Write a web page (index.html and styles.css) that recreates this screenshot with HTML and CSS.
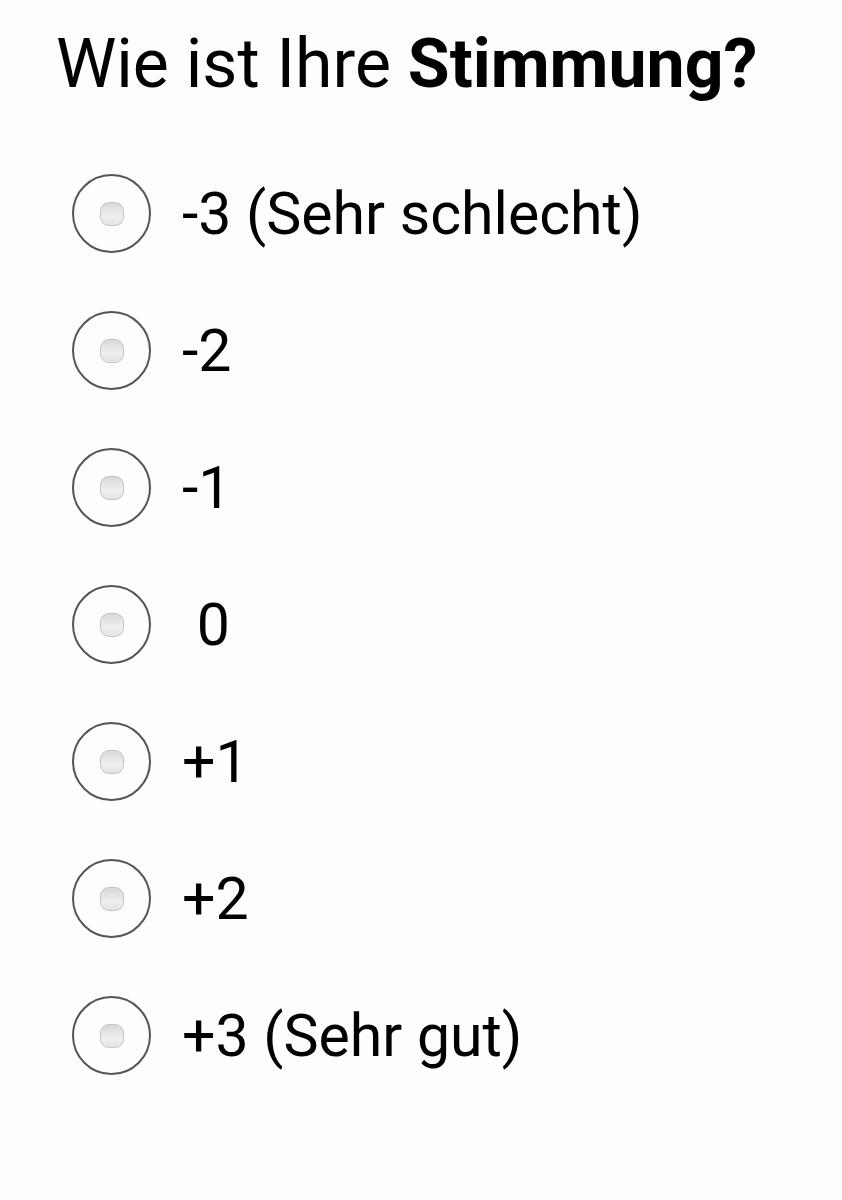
FILE: index.html
```html
<!DOCTYPE html>
<html lang="de">
<head>
<meta charset="utf-8">
<title>Stimmung</title>
<link rel="stylesheet" href="styles.css">
</head>
<body>
<main class="page">
  <h1 class="title">Wie ist Ihre <strong>Stimmung?</strong></h1>
  <ul class="options">
    <li class="option"><span class="radio"><span class="dot"></span></span><span class="label">-3 (Sehr schlecht)</span></li>
    <li class="option"><span class="radio"><span class="dot"></span></span><span class="label">-2</span></li>
    <li class="option"><span class="radio"><span class="dot"></span></span><span class="label">-1</span></li>
    <li class="option"><span class="radio"><span class="dot"></span></span><span class="label">&nbsp;0</span></li>
    <li class="option"><span class="radio"><span class="dot"></span></span><span class="label">+1</span></li>
    <li class="option"><span class="radio"><span class="dot"></span></span><span class="label">+2</span></li>
    <li class="option"><span class="radio"><span class="dot"></span></span><span class="label">+3 (Sehr gut)</span></li>
  </ul>
</main>
</body>
</html>
```
FILE: styles.css
```css
html, body {
  margin: 0;
  padding: 0;
  background: #fdfdfd;
}
body {
  font-family: Roboto, "Noto Sans", sans-serif;
  color: #000;
}
.page {
  padding: 22px 0 0 56px;
}
.title {
  margin: 0;
  font-size: 68px;
  line-height: 84px;
  font-weight: 400;
}
.title strong {
  font-weight: 700;
}
.options {
  list-style: none;
  margin: 39px 0 0 0;
  padding: 0 0 0 16px;
}
.option {
  height: 137px;
  display: flex;
  align-items: center;
  gap: 31px;
}
.radio {
  box-sizing: border-box;
  width: 79px;
  height: 79px;
  border: 2.5px solid #555;
  border-radius: 50%;
  display: flex;
  align-items: center;
  justify-content: center;
  flex: none;
}
.dot {
  box-sizing: border-box;
  width: 24px;
  height: 24px;
  border-radius: 9px;
  border: 1px solid #c4c4c4;
  background: linear-gradient(#d8d8d8, #efefef 60%, #e4e4e4);
}
.label {
  font-size: 59px;
  line-height: 1;
}
```
